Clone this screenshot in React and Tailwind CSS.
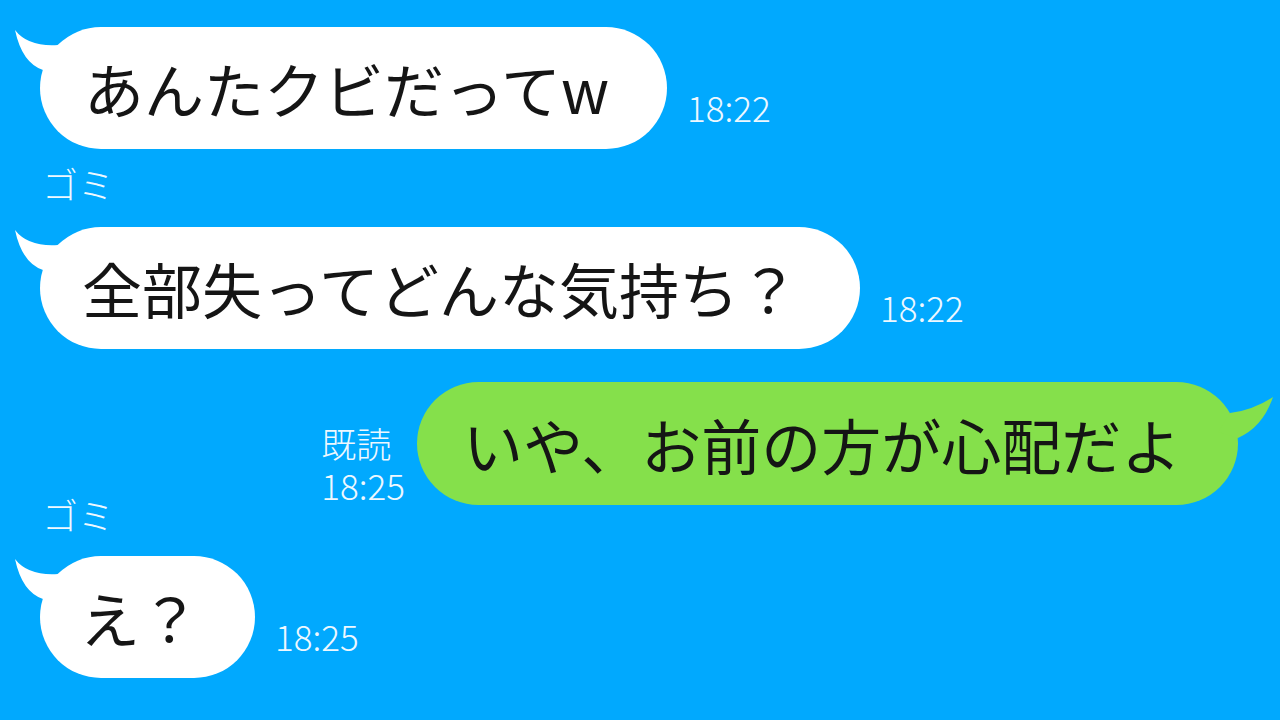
import React from "react";

const FONT = "font-['Noto_Sans_CJK_JP','Noto_Sans',sans-serif]";

function TailLeft() {
  return (
    <svg
      className="absolute left-[-30px] top-0 w-[70px] h-[60px] overflow-visible"
      viewBox="-30 0 70 60"
    >
      <path d="M18 18 Q-12 20 -25 3 Q-18 36 3 43 L30 40 Z" fill="#ffffff" />
    </svg>
  );
}

function TailRight() {
  return (
    <svg
      className="absolute right-[-40px] top-0 w-[70px] h-[70px] overflow-visible"
      viewBox="-30 0 70 70"
    >
      <path d="M-8 31 Q15 28 35 15 Q25 45 0 56 L-20 50 Z" fill="#85e04b" />
    </svg>
  );
}

function LeftRow({ text, width, pl, time, className = "" }) {
  return (
    <div className={`flex items-end pl-[40px] ${className}`}>
      <div
        className={`relative h-[122px] ${width} ${pl} rounded-full bg-white flex items-center shrink-0`}
      >
        <TailLeft />
        <span className="relative text-[60px] leading-none text-[#151515] whitespace-nowrap">
          {text}
        </span>
      </div>
      <div className="ml-[20px] mb-[25px] text-[35px] leading-none font-light text-[#eef8ff]">
        {time}
      </div>
    </div>
  );
}

function Label({ className = "" }) {
  return (
    <div className={`pl-[42px] h-[36px] text-[36px] leading-none font-light text-[#eef8ff] ${className}`}>
      ゴミ
    </div>
  );
}

export default function App() {
  return (
    <div className={`w-[1280px] h-[720px] bg-[#01a9fe] overflow-hidden flex flex-col pt-[27px] ${FONT}`}>
      <LeftRow text="あんたクビだってw" width="w-[627px]" pl="pl-[44px]" time="18:22" />
      <Label className="mt-[16px]" />
      <LeftRow
        className="mt-[26px]"
        text="全部失ってどんな気持ち？"
        width="w-[820px]"
        pl="pl-[42px]"
        time="18:22"
      />
      <div className="mt-[33px] flex justify-end items-start pr-[42px]">
        <div className="mr-[12px] mt-[40px] flex flex-col text-[35px] leading-[42px] font-light text-[#eef8ff]">
          <span>既読</span>
          <span>18:25</span>
        </div>
        <div className="relative h-[123px] w-[821px] rounded-full bg-[#85e04b] flex items-center pl-[46px] shrink-0">
          <TailRight />
          <span className="relative text-[60px] leading-none text-[#151515] whitespace-nowrap">
            いや、お前の方が心配だよ
          </span>
        </div>
      </div>
      <Label className="mt-[-10px]" />
      <LeftRow
        className="mt-[24px]"
        text="え？"
        width="w-[215px]"
        pl="pl-[40px]"
        time="18:25"
      />
    </div>
  );
}
